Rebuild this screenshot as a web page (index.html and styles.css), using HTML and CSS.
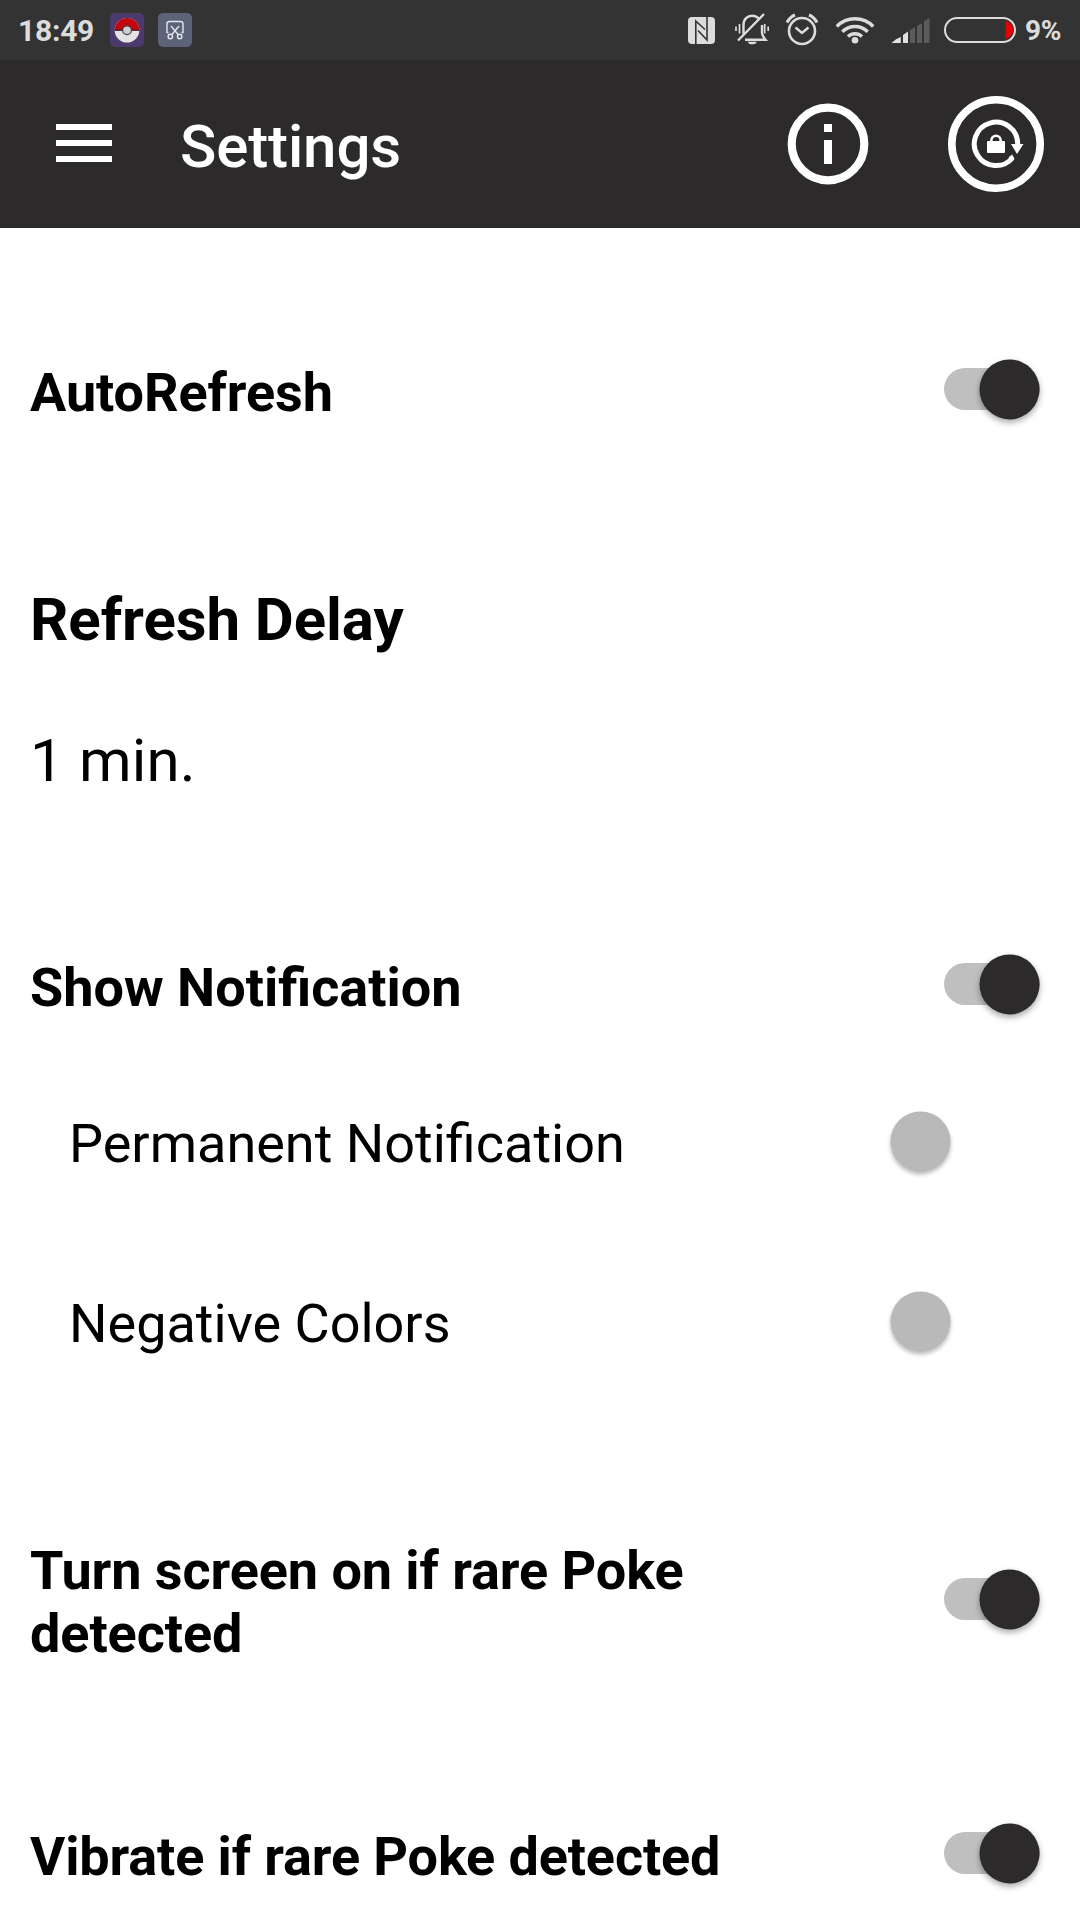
FILE: index.html
```html
<!DOCTYPE html>
<html lang="en">
<head>
<meta charset="utf-8">
<title>Settings</title>
<link rel="stylesheet" href="styles.css">
</head>
<body>
<div class="status-bar">
  <span class="clock">18:49</span>
  <svg class="app-icon" viewBox="0 0 34 34" width="34" height="34">
    <rect width="34" height="34" rx="5" fill="#4d3a6c"/>
    <circle cx="17" cy="17.3" r="12.3" fill="#e4e2e4"/>
    <path d="M4.7 17.3a12.3 12.3 0 0 1 24.6 0z" fill="#c4060c"/>
    <path d="M4.7 17.3h24.6" stroke="#33262f" stroke-width="1.2"/>
    <circle cx="17" cy="17.3" r="4.4" fill="#cfcdcf" stroke="#4a4148" stroke-width="1.2"/>
  </svg>
  <svg class="app-icon cut-icon" viewBox="0 0 34 34" width="34" height="34">
    <rect width="34" height="34" rx="5" fill="#5c6378"/>
    <g fill="none" stroke="#e3e6ee" stroke-width="1.4">
      <path d="M10.500 19.500H9V11a2.500 2.500 0 0 1 2.500-2.500h11A2.500 2.500 0 0 1 25 11v8.500h-1.500M13 13l7.500 9M21 13l-7.500 9"/>
      <circle cx="12.300" cy="23.500" r="2.200"/><circle cx="21.700" cy="23.500" r="2.200"/>
    </g>
  </svg>
  <svg class="indicators" viewBox="670 0 350 60" width="350" height="60">
    <rect x="688" y="17" width="27" height="27" rx="4" fill="#dcdcdc"/>
    <path d="M695.800 44V21l9.200 8.500M707 17v23l-9-9.500" fill="none" stroke="#333" stroke-width="1.600"/>
    <g fill="none" stroke="#dcdcdc" stroke-width="2.400">
      <path d="M743.500 34V25c0-6 4-9.300 8.500-9.300 2.700 0 5 1 6.500 2.600M762 25v8c0 3 2 5 3.500 6.800H745M738 40.500L764 14"/>
      <path d="M736 26.500v4.500M739.500 24v9.500M764.700 24v9.500M768.200 26.500v4.500" stroke-width="1.700"/>
    </g>
    <path d="M747.500 41.800h9.500a5 3.700 0 0 1-9.500 0z" fill="#dcdcdc"/>
    <g fill="none" stroke="#dcdcdc">
      <circle cx="802" cy="31" r="13" stroke-width="2.600"/>
      <path d="M795.500 27.500l6.500 5.500 6.500-5.500" stroke-width="2.400"/>
      <path d="M787 22.500q3-5.500 8-7.500M817 22.500q-3-5.500-8-7.500" stroke-width="3"/>
    </g>
    <g fill="none" stroke="#dcdcdc" stroke-width="3.500">
      <path d="M836.800 26.500a25.500 25.500 0 0 1 36.400 0M842.300 31.800a18 18 0 0 1 25.400 0M848 36.500a10 10 0 0 1 14 0"/>
    </g>
    <circle cx="855" cy="40.200" r="3.300" fill="#dcdcdc"/>
    <path d="M891.500 43q4-4.500 9.300-6v6zM903 35l5-3.500V43h-5z" fill="#e0e0e0"/>
    <path d="M910 30l5-3v16h-5zM917 26l5-3v20h-5zM924 21l5.500-3v25H924z" fill="#5b5b5b"/>
    <path d="M1005.700 20.500c5 2.500 7.500 6 7.500 9.500s-2.500 7-7.500 9.500z" fill="#e60000"/>
    <rect x="945" y="18" width="70" height="24" rx="12" fill="none" stroke="#dcdcdc" stroke-width="2"/>
  </svg>
  <span class="percent">9%</span>
</div>

<header class="app-bar">
  <svg class="menu" viewBox="0 0 56 38" width="56" height="38" fill="#fff">
    <path d="M0 0h56v6H0zM0 16h56v6H0zM0 32h56v6H0z"/>
  </svg>
  <h1 class="title">Settings</h1>
  <svg class="info" viewBox="0 0 80 80" width="80" height="80">
    <circle cx="40" cy="40" r="36.300" fill="none" stroke="#fff" stroke-width="8.200"/>
    <path d="M36 20h8v8h-8zM36 36h8v24h-8z" fill="#fff"/>
  </svg>
  <svg class="rotate-lock" viewBox="0 0 96 96" width="96" height="96">
    <circle cx="48" cy="48" r="44.200" fill="none" stroke="#fff" stroke-width="7.600"/>
    <path d="M69.700 48A21.700 21.700 0 1 0 64.500 62" fill="none" stroke="#fff" stroke-width="5"/>
    <path d="M63 48h12.500l-6.500 10zM64 58.500l2.500 4-3 3-3-4z" fill="#fff"/>
    <rect x="39" y="45" width="18" height="12" rx="1" fill="#fff"/>
    <path d="M43.300 46v-1.500a4.700 4.700 0 0 1 9.400 0V46" fill="none" stroke="#fff" stroke-width="2.500"/>
  </svg>
</header>

<main class="settings">
  <section class="row auto"><span class="label">AutoRefresh</span><span class="switch on"></span></section>
  <section class="delay">
    <h2 class="delay-title">Refresh Delay</h2>
    <p class="delay-value">1 min.</p>
  </section>
  <section class="row show"><span class="label">Show Notification</span><span class="switch on"></span></section>
  <section class="row sub permanent"><span class="label">Permanent Notification</span><span class="switch"></span></section>
  <section class="row sub negative"><span class="label">Negative Colors</span><span class="switch"></span></section>
  <section class="row screen"><span class="label">Turn screen on if rare Poke detected</span><span class="switch on"></span></section>
  <section class="row vibrate"><span class="label">Vibrate if rare Poke detected</span><span class="switch on"></span></section>
</main>
</body>
</html>
```
FILE: styles.css
```css
* { box-sizing: border-box; margin: 0; padding: 0; }

body {
  width: 1080px;
  height: 1920px;
  overflow: hidden;
  background: #fff;
  color: #000;
  font-family: Roboto, "Noto Sans", sans-serif;
}

svg { display: block; flex: none; overflow: visible; }

.status-bar {
  display: flex;
  align-items: center;
  height: 60px;
  padding-left: 18px;
  background: #333;
  color: #dcdcdc;
}

.clock { width: 92px; font-size: 30px; font-weight: 700; letter-spacing: -.25px; white-space: nowrap; }
.cut-icon { margin-left: 14px; }
.indicators { margin-left: 478px; }
.percent { margin-left: 5px; font-size: 28px; font-weight: 700; letter-spacing: -.4px; }

.app-bar {
  display: flex;
  align-items: center;
  height: 168px;
  padding: 0 36px 0 56px;
  background: #2c2a2b;
  color: #fff;
}

.menu { margin-bottom: 2px; }
.title { margin: 4px auto 0 68px; font-size: 60px; font-weight: 500; letter-spacing: -.12px; }
.rotate-lock { margin-left: 80px; }

.settings { display: flex; flex-direction: column; }

.row {
  display: flex;
  align-items: center;
  justify-content: space-between;
  padding: 0 40px 0 30px;
  font-size: 54px;
  font-weight: 700;
  line-height: 63px;
}

.label { width: 720px; }

.sub { padding: 0 129px 0 69px; font-weight: 400; }

.auto { margin-top: 133px; letter-spacing: -.08px; }
.delay { margin-top: 160px; padding-left: 30px; font-size: 60px; line-height: 71px; }
.delay-title { font-size: 60px; font-weight: 700; letter-spacing: -.08px; }
.delay-value { margin-top: 70px; letter-spacing: .15px; }
.show { margin-top: 160px; }
.permanent { margin-top: 93px; }
.negative { margin-top: 117px; }
.screen { margin-top: 184px; letter-spacing: -.08px; }
.vibrate { margin-top: 160px; letter-spacing: -.13px; }

/* The track is the element itself; the knob sits at its trailing end. */
.switch {
  display: flex;
  align-items: center;
  justify-content: flex-end;
  width: 60px;
  height: 42px;
  margin-bottom: 5px;
  border-radius: 21px;
}

.switch::after {
  content: "";
  flex: none;
  width: 60px;
  height: 60px;
  border-radius: 50%;
  background: #b9b9b9;
  box-shadow: 0 3px 4px rgba(0, 0, 0, .28);
  transform: translate(-.5px, .4px);
}

.switch.on { width: 96px; margin-bottom: 7px; background: #bfbfbf; }
.switch.on::after { background: #2c2a2b; box-shadow: 0 3px 6px rgba(0, 0, 0, .35); }
.screen .switch { margin-bottom: 6px; }
```
